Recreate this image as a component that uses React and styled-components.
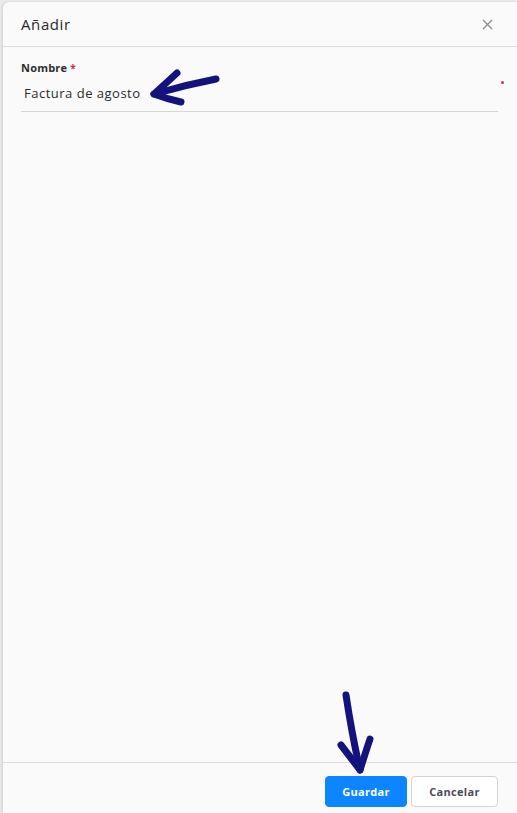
import React from "react";
import styled, { createGlobalStyle } from "styled-components";

const GlobalStyle = createGlobalStyle`
  html, body {
    margin: 0;
    padding: 0;
    height: 100%;
    background: #ececec;
    font-family: "Open Sans", "Noto Sans", sans-serif;
  }
  #root {
    height: 100%;
  }
`;

// Drawer panel
const Panel = styled.div`
  position: relative;
  box-sizing: border-box;
  height: 811px;
  margin: 2px 0 0 3px;
  background: #fafafa;
  border-radius: 6px 0 0 0;
  box-shadow: -1px 0 3px rgba(0, 0, 0, 0.12);
  display: flex;
  flex-direction: column;
`;

const Header = styled.div`
  height: 44px;
  display: flex;
  align-items: center;
  justify-content: space-between;
  padding: 0 23px 0 18px;
  border-bottom: 1px solid #dcdcdc;
`;

const Title = styled.h1`
  margin: 0;
  font-size: 15px;
  font-weight: 400;
  color: #2a2a2a;
  letter-spacing: 0.6px;
`;

const CloseButton = styled.button`
  border: none;
  background: none;
  padding: 0;
  width: 14px;
  height: 14px;
  display: flex;
  align-items: center;
  justify-content: center;
  color: #8a8a8a;
  cursor: pointer;
`;

const Body = styled.div`
  flex: 1;
  padding: 13px 19px 0 18px;
`;

const Field = styled.div`
  display: flex;
  flex-direction: column;
  position: relative;
`;

const Label = styled.label`
  font-size: 11px;
  font-weight: 700;
  color: #2e2e2e;
  letter-spacing: 0.2px;
  display: flex;
  align-items: center;
  gap: 3px;
`;

const Star = styled.span`
  color: #c8303a;
  font-size: 10px;
`;

const InputRow = styled.div`
  display: flex;
  align-items: center;
  border-bottom: 1px solid #d6d6d6;
  height: 36px;
`;

const Input = styled.input`
  border: none;
  background: transparent;
  outline: none;
  font-family: inherit;
  font-size: 13px;
  letter-spacing: 0.5px;
  color: #2b2b2b;
  padding: 0 0 0 3px;
  width: 300px;
`;

const RequiredDot = styled.span`
  position: absolute;
  right: -6px;
  top: 21px;
  width: 3px;
  height: 3px;
  border-radius: 50%;
  background: #c23a5a;
`;

const Footer = styled.div`
  height: 51px;
  border-top: 1px solid #dcdcdc;
  display: flex;
  align-items: flex-start;
  justify-content: flex-end;
  gap: 4px;
  padding: 13px 19px 0 0;
  box-sizing: border-box;
`;

const Button = styled.button`
  height: 31px;
  padding: 0;
  width: ${(p) => (p.$primary ? "82px" : "87px")};
  border-radius: 4px;
  font-family: inherit;
  font-size: 11px;
  font-weight: 700;
  letter-spacing: 0.3px;
  cursor: pointer;
  border: 1px solid ${(p) => (p.$primary ? "#0d85ff" : "#d4d4d4")};
  background: ${(p) => (p.$primary ? "#0d85ff" : "#ffffff")};
  color: ${(p) => (p.$primary ? "#ffffff" : "#4b4b55")};
`;

const Annotation = styled.svg`
  position: absolute;
  pointer-events: none;
  overflow: visible;
`;

const arrowStroke = {
  fill: "none",
  stroke: "#14137d",
  strokeWidth: 7,
  strokeLinecap: "round",
  strokeLinejoin: "round",
};

export default function App() {
  return (
    <>
      <GlobalStyle />
      <Panel>
        <Header>
          <Title>Añadir</Title>
          <CloseButton aria-label="Cerrar">
            <svg width="11" height="11" viewBox="0 0 11 11">
              <path d="M1 1L10 10M10 1L1 10" stroke="currentColor" strokeWidth="1.2" />
            </svg>
          </CloseButton>
        </Header>
        <Body>
          <Field>
            <Label>
              Nombre <Star>*</Star>
            </Label>
            <InputRow>
              <Input defaultValue="Factura de agosto" />
            </InputRow>
            <RequiredDot />
          </Field>
        </Body>
        <Footer>
          <Button $primary>Guardar</Button>
          <Button>Cancelar</Button>
        </Footer>

        <Annotation width="517" height="813" style={{ left: -3, top: -2 }}>
          <g {...arrowStroke}>
            <path d="M216 79 Q185 85 154 94" />
            <path d="M177 73 Q164 85 154 94 Q167 99 181 102" />
            <path d="M346 695 Q352 735 360 770" />
            <path d="M341 745 Q351 758 360 770 Q365 754 370 739" />
          </g>
        </Annotation>
      </Panel>
    </>
  );
}
